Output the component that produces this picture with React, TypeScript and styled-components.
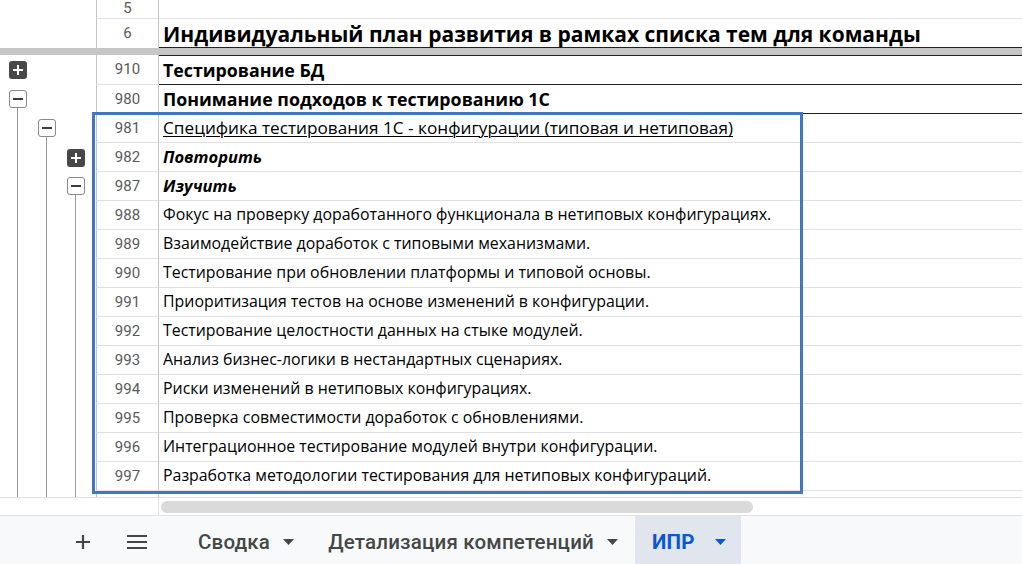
import React from 'react';
import styled, { createGlobalStyle } from 'styled-components';

const Global = createGlobalStyle`
  html, body { margin: 0; padding: 0; background: #fff; overflow: hidden; }
  body { width: 1022px; height: 564px; font-family: "Open Sans", "Noto Sans", sans-serif; }
  * { box-sizing: border-box; }
`;

const Page = styled.div`
  display: flex;
  flex-direction: column;
  width: 1022px;
  height: 564px;
  overflow: hidden;
`;

const Sheet = styled.div`
  position: relative;
  display: flex;
  flex-direction: column;
  flex: none;
  height: 515px;
  overflow: hidden;
`;

const Row = styled.div<{ $h: number }>`
  display: grid;
  grid-template-columns: 96px 63px 1fr;
  height: ${p => p.$h}px;
  flex: none;
`;

const Gutter = styled.div`
  display: flex;
  padding-left: 3px;
  height: 100%;
`;

const Level = styled.div<{ $top: number; $center?: boolean }>`
  width: 29px;
  display: flex;
  flex-direction: column;
  align-items: center;
  justify-content: ${p => (p.$center ? 'center' : 'flex-start')};
  padding-top: ${p => (p.$center ? 0 : p.$top)}px;
  height: 100%;
`;

const VLine = styled.div`
  flex: 1;
  width: 1px;
  background: #9a9a9a;
`;

const PlusBox = styled.div`
  width: 18px;
  height: 18px;
  border-radius: 3px;
  background: #474747;
  display: flex;
  align-items: center;
  justify-content: center;
  flex: none;
`;

const MinusBox = styled.div`
  width: 18px;
  height: 18px;
  border-radius: 3px;
  background: #fff;
  border: 1.5px solid #8a8a8a;
  display: flex;
  align-items: center;
  justify-content: center;
  flex: none;
`;

const Header = styled.div<{ $bottom?: boolean; $top?: boolean }>`
  border-left: 1px solid #c4c4c4;
  border-right: 1px solid #c4c4c4;
  border-bottom: ${p => (p.$bottom === false ? 'none' : '1px solid #e1e1e1')};
  display: flex;
  align-items: ${p => (p.$top ? 'flex-start' : 'center')};
  justify-content: center;
  font-family: Roboto, "Liberation Sans", sans-serif;
  font-size: 15px;
  line-height: 17px;
  color: #5a5a5a;
`;

type Kind = 'title' | 'section' | 'topic' | 'label' | 'item';

const sizes: Record<Kind, number> = { title: 21, section: 17.8, topic: 17.2, label: 16.5, item: 15.9 };

const Cell = styled.div<{ $kind: Kind; $dark?: boolean; $darkTop?: boolean; $bottom?: boolean }>`
  display: flex;
  align-items: ${p => (p.$kind === 'title' ? 'flex-end' : 'center')};
  padding-left: 4px;
  white-space: nowrap;
  overflow: hidden;
  color: #000;
  border-top: ${p => (p.$darkTop ? '1px solid #222' : 'none')};
  border-bottom: ${p =>
    p.$bottom === false ? 'none' : p.$dark ? '1px solid #222' : '1px solid #e1e1e1'};
  font-size: ${p => sizes[p.$kind]}px;
  line-height: 1.25;
  font-weight: ${p => (p.$kind === 'title' || p.$kind === 'section' || p.$kind === 'label' ? 700 : 400)};
  font-style: ${p => (p.$kind === 'label' ? 'italic' : 'normal')};
  text-decoration: ${p => (p.$kind === 'topic' ? 'underline' : 'none')};
  text-decoration-thickness: 1px;
  text-underline-offset: 2px;
`;

const FreezeBar = styled.div`
  height: 7px;
  flex: none;
  background: #c6c6c6;
`;

const Selection = styled.div`
  position: absolute;
  left: 92px;
  top: 112px;
  width: 711px;
  height: 382px;
  border: 3px solid #4277bc;
  pointer-events: none;
`;

const ScrollRow = styled.div`
  display: grid;
  grid-template-columns: 159px 1fr;
  height: 18px;
  flex: none;
  border-top: 1px solid #e1e1e1;
`;

const ScrollCorner = styled.div`
  border-right: 1px solid #e1e1e1;
`;

const ScrollTrack = styled.div`
  display: flex;
  align-items: center;
  padding-left: 2px;
`;

const Thumb = styled.div`
  width: 592px;
  height: 12px;
  border-radius: 6px;
  background: #dadada;
`;

const TabBar = styled.div`
  flex: none;
  height: 49px;
  border-top: 1px solid #e1e1e1;
  background: #f8f9fb;
  display: flex;
  align-items: stretch;
  padding-left: 63px;
  font-family: Roboto, "Liberation Sans", sans-serif;
`;

const IconBtn = styled.div<{ $w: number }>`
  width: ${p => p.$w}px;
  display: flex;
  align-items: center;
  justify-content: center;
  padding-top: 4px;
  color: #444746;
`;

const Tab = styled.div<{ $active?: boolean }>`
  display: flex;
  align-items: center;
  gap: ${p => (p.$active ? 20 : 13)}px;
  padding: 4px ${p => (p.$active ? 15 : 17)}px 0 17px;
  background: ${p => (p.$active ? '#e1e6ee' : 'transparent')};
  color: ${p => (p.$active ? '#0b57d0' : '#444746')};
  font-size: 20.5px;
  font-weight: ${p => (p.$active ? 700 : 500)};
  letter-spacing: 0.2px;
`;

const Caret = ({ color }: { color: string }) => (
  <svg width="11" height="6" viewBox="0 0 11 6">
    <path d="M0 0 L11 0 L5.5 6 Z" fill={color} />
  </svg>
);

type LevelState = 'none' | 'line' | 'plus' | 'minus';

type RowData = {
  num: string;
  text: string;
  kind: Kind;
  levels: LevelState[];
  dark?: boolean;
  darkTop?: boolean;
  h?: number;
};

const rows: RowData[] = [
  { num: '910', text: 'Тестирование БД', kind: 'section', levels: ['plus', 'none', 'none'], dark: true, darkTop: true, h: 30 },
  { num: '980', text: 'Понимание подходов к тестированию 1С', kind: 'section', levels: ['minus', 'none', 'none'], dark: true },
  { num: '981', text: 'Специфика тестирования 1С - конфигурации (типовая и нетиповая)', kind: 'topic', levels: ['line', 'minus', 'none'] },
  { num: '982', text: 'Повторить', kind: 'label', levels: ['line', 'line', 'plus'] },
  { num: '987', text: 'Изучить', kind: 'label', levels: ['line', 'line', 'minus'] },
  { num: '988', text: 'Фокус на проверку доработанного функционала в нетиповых конфигурациях.', kind: 'item', levels: ['line', 'line', 'line'] },
  { num: '989', text: 'Взаимодействие доработок с типовыми механизмами.', kind: 'item', levels: ['line', 'line', 'line'] },
  { num: '990', text: 'Тестирование при обновлении платформы и типовой основы.', kind: 'item', levels: ['line', 'line', 'line'] },
  { num: '991', text: 'Приоритизация тестов на основе изменений в конфигурации.', kind: 'item', levels: ['line', 'line', 'line'] },
  { num: '992', text: 'Тестирование целостности данных на стыке модулей.', kind: 'item', levels: ['line', 'line', 'line'] },
  { num: '993', text: 'Анализ бизнес-логики в нестандартных сценариях.', kind: 'item', levels: ['line', 'line', 'line'] },
  { num: '994', text: 'Риски изменений в нетиповых конфигурациях.', kind: 'item', levels: ['line', 'line', 'line'] },
  { num: '995', text: 'Проверка совместимости доработок с обновлениями.', kind: 'item', levels: ['line', 'line', 'line'] },
  { num: '996', text: 'Интеграционное тестирование модулей внутри конфигурации.', kind: 'item', levels: ['line', 'line', 'line'] },
  { num: '997', text: 'Разработка методологии тестирования для нетиповых конфигураций.', kind: 'item', levels: ['line', 'line', 'line'] },
];

const PlusGlyph = ({ color, size = 10 }: { color: string; size?: number }) => (
  <svg width={size} height={size} viewBox="0 0 10 10">
    <path d="M5 0 V10 M0 5 H10" stroke={color} strokeWidth={size > 10 ? 1.6 : 2} />
  </svg>
);

const MinusGlyph = () => (
  <svg width="10" height="10" viewBox="0 0 10 10">
    <path d="M0 5 H10" stroke="#3c3c3c" strokeWidth="2" />
  </svg>
);

const GroupLevel = ({ state, top }: { state: LevelState; top: number }) => {
  if (state === 'plus')
    return (
      <Level $top={top} $center>
        <PlusBox>
          <PlusGlyph color="#fff" />
        </PlusBox>
      </Level>
    );
  if (state === 'minus')
    return (
      <Level $top={top}>
        <MinusBox>
          <MinusGlyph />
        </MinusBox>
        <VLine />
      </Level>
    );
  if (state === 'line')
    return (
      <Level $top={0}>
        <VLine />
      </Level>
    );
  return <Level $top={0} />;
};

export default function App() {
  return (
    <Page>
      <Global />
      <Sheet>
        <Row $h={19}>
          <Gutter />
          <Header $top>5</Header>
          <Cell $kind="item" />
        </Row>
        <Row $h={29}>
          <Gutter />
          <Header $bottom={false}>6</Header>
          <Cell $kind="title" $dark>
            Индивидуальный план развития в рамках списка тем для команды
          </Cell>
        </Row>
        <FreezeBar />
        {rows.map(r => (
          <Row key={r.num} $h={r.h ?? 29}>
            <Gutter>
              {r.levels.map((l, i) => (
                <GroupLevel key={i} state={l} top={5} />
              ))}
            </Gutter>
            <Header>{r.num}</Header>
            <Cell $kind={r.kind} $dark={r.dark} $darkTop={r.darkTop}>
              {r.text}
            </Cell>
          </Row>
        ))}
        <Row $h={6}>
          <Gutter>
            <GroupLevel state="line" top={0} />
            <GroupLevel state="line" top={0} />
            <GroupLevel state="line" top={0} />
          </Gutter>
          <Header $bottom={false} />
          <Cell $kind="item" $bottom={false} />
        </Row>
        <ScrollRow>
          <ScrollCorner />
          <ScrollTrack>
            <Thumb />
          </ScrollTrack>
        </ScrollRow>
        <Selection />
      </Sheet>
      <TabBar>
        <IconBtn $w={40}>
          <PlusGlyph color="#444746" size={14} />
        </IconBtn>
        <IconBtn $w={14} />
        <IconBtn $w={40}>
          <svg width="20" height="14" viewBox="0 0 20 14">
            <path d="M0 1 H20 M0 7 H20 M0 13 H20" stroke="#444746" strokeWidth="2" />
          </svg>
        </IconBtn>
        <IconBtn $w={24} />
        <Tab>
          Сводка
          <Caret color="#444746" />
        </Tab>
        <Tab>
          Детализация компетенций
          <Caret color="#444746" />
        </Tab>
        <Tab $active>
          ИПР
          <Caret color="#0b57d0" />
        </Tab>
      </TabBar>
    </Page>
  );
}
